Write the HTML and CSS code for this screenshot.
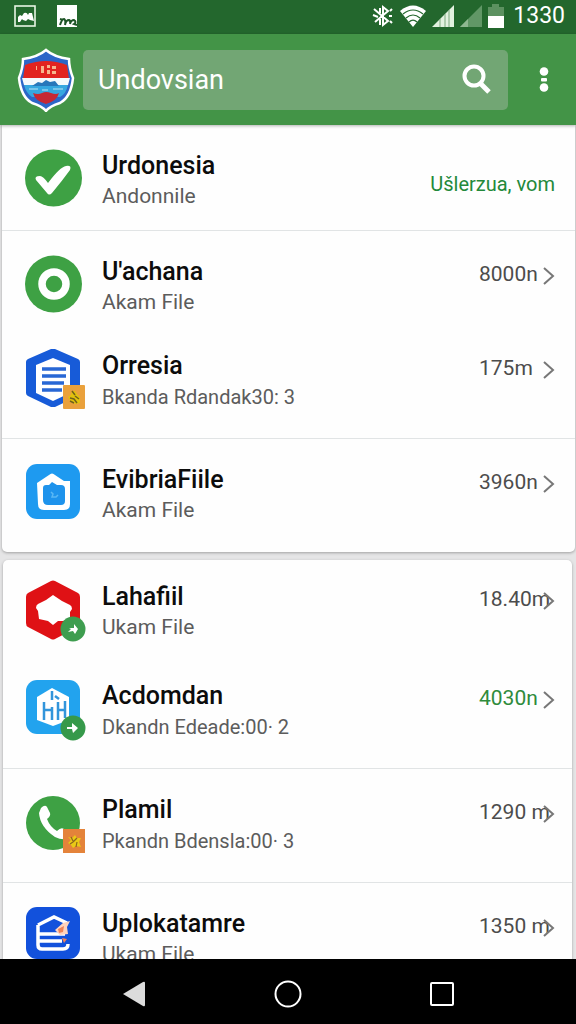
FILE: index.html
```
<!DOCTYPE html>
<html lang="en">
<head>
  <meta charset="UTF-8">
  <meta name="viewport" content="width=device-width, initial-scale=1">
  <title>Undovsian</title>
  <link rel="stylesheet" href="styles.css">
</head>
<body>
  <div class="status-bar">
    <div class="status-left">
      <svg width="22" height="22" viewBox="0 0 22 22"><rect x="1" y="1" width="20" height="20" fill="none" stroke="#e8f5e4" stroke-width="1.6"/><path d="M4 17V12l2-2 2 1 2-3q3-1 4 2l1-2h3l2 8-4-1-2-1-2 2-3-1-1-1-2 3z" fill="#fff"/></svg>
      <svg width="22" height="22" viewBox="0 0 22 22"><path d="M1 0h20v22H1z" fill="#fff"/><path d="M4 20q2-6 4-6 2 1 1 6 1-5 4-5 2 1 1 4 1-4 4-4 3 2 0 4l3 1M4 14l3 1" fill="none" stroke="#1d5426" stroke-width="2"/></svg>
    </div>
    <div class="status-right">
      <svg width="22" height="24" viewBox="0 0 22 24"><path d="M2 5l14 12-5 4V3l5 4L3 18M1 11l5 2M18 7l2-2M17 12h3M18 17l2 2M8 4v5M8 15v6" fill="none" stroke="#fff" stroke-width="2"/></svg>
      <svg width="26" height="22" viewBox="0 0 26 22"><path d="M0 6Q13-5 26 6L13 22z" fill="#fff"/><path d="M3 9q10-8 20 0M6 13q7-6 14 0M9 17q4-4 8 0" fill="none" stroke="#24672d" stroke-width="1.2"/></svg>
      <svg width="22" height="22" viewBox="0 0 22 22"><path d="M0 22L22 0v22z" fill="#e2f1df"/><path d="M8 14v8M13 9v13M17 5v17" stroke="#7ba77d" stroke-width="1"/></svg>
      <svg width="22" height="22" viewBox="0 0 22 22"><path d="M0 22L22 0v22z" fill="#619766"/><path d="M0 22L8 14v8z" fill="#8fb891"/></svg>
      <svg width="16" height="24" viewBox="0 0 16 24"><path d="M0 3h4V0h7v3h5v9H0z" fill="#5c9160"/><path d="M0 12h16v12H0z" fill="#fff"/></svg>
      <span class="clock">1330</span>
    </div>
  </div>

  <header class="app-bar">
    <svg class="logo" width="58" height="64" viewBox="0 0 58 64">
      <path d="M29 2q8 7 23 9 0 9 4 19-2 19-13 25-10 3-14 8-4-5-14-8Q4 49 2 30 6 20 6 11q15-2 23-9z" fill="#2c66c8" stroke="#fff" stroke-width="2.5"/>
      <path d="M8 17q11-4 21-4t21 4l2 14H6z" fill="#e2231f"/>
      <path d="M5 30h48l-2 7H7z" fill="#f4f9fc"/>
      <path d="M7 37h44q-2 9-8 12H15Q9 45 7 37z" fill="#36a7e0"/>
      <path d="M16 45q5 2 9 0t9 0 8 0q-2 8-13 11-11-3-13-11z" fill="#c62834"/>
      <path d="M24 18h3v7h-3zM30 17h3v3h-3zM30 22h3v4h-3zM35 18h4v3h-4zM35 23h4v3h-4zM19 18h1v4h-1z" fill="#f6b58c"/>
      <path d="M15 38l6-4 4 1 4-3 4 2 5-1 4 5z" fill="#2877ba"/>
      <path d="M12 41h9M25 42h6M36 41h10" stroke="#b9e2f3" stroke-width="1"/>
    </svg>
    <form class="search-box">
      <input type="text" id="searchInput" value="Undovsian" aria-label="Search">
      <button type="button" class="search-btn" aria-label="Search">
        <svg width="32" height="32" viewBox="0 0 32 32"><circle cx="13" cy="12" r="9.5" fill="none" stroke="#fff" stroke-width="4"/><path d="M19 19l9 9" stroke="#fff" stroke-width="5"/></svg>
      </button>
    </form>
    <button class="menu-btn" aria-label="More">
      <svg width="10" height="26" viewBox="0 0 10 26"><circle cx="5" cy="4.500" r="4.300" fill="#fff"/><rect x="2" y="11" width="6" height="3.500" rx="1" fill="#fff"/><circle cx="5" cy="20.500" r="4.300" fill="#fff"/></svg>
    </button>
  </header>

  <main class="content">
    <ul class="card card-main">
      <li class="divided">
        <a class="row row-top" href="#">
          <span class="icon"><svg width="58" height="58" viewBox="0 0 58 58"><circle cx="29.500" cy="29" r="28.500" fill="#3ea144"/><path d="M12 31q-2-4 4-4 3 0 8 7Q36 18 42 17q6-1 4 4Q38 32 28 44q-3 3-5 0z" fill="#fff"/></svg></span>
          <span class="text"><span class="title">Urdonesia</span><span class="sub">Andonnile</span></span>
          <span class="status">Ušlerzua, vom</span>
        </a>
      </li>
      <li>
        <a class="row row-short" href="#">
          <span class="icon"><svg width="58" height="58" viewBox="0 0 58 58"><circle cx="29.500" cy="29" r="28.500" fill="#3ea144"/><circle cx="30" cy="29" r="12" fill="none" stroke="#fff" stroke-width="7.500"/></svg></span>
          <span class="text"><span class="title">U'achana</span><span class="sub">Akam File</span></span>
          <span class="value">8000n</span>
          <svg class="chevron" width="12" height="18" viewBox="0 0 12 18"><path d="M1 1l9 8-9 8"/></svg>
        </a>
      </li>
      <li class="divided">
        <a class="row" href="#">
          <span class="icon">
            <svg width="58" height="58" viewBox="0 0 58 58"><path d="M31 0l23 10q2 1 2 3v31q0 2-2 3L31 58q-2 1-4 0L4 47q-2-1-2-3V13q0-2 2-3L27 0q2-1 4 0z" fill="#175bd8"/><path d="M29 9l17 7v28l-17 8-17-8V16z" fill="#fff"/><path d="M18 20h24M18 27h24M18 34h22M18 41h20" stroke="#2867d5" stroke-width="3.500"/></svg>
            <svg class="badge" width="24" height="24" viewBox="0 0 24 24"><rect x="1" width="22" height="24" rx="1" fill="#eaa13c"/><path d="M10 6l3 0 2 3 3 3v6l-4 1-5-2-3-5 3-2z" fill="#e2c20c"/><path d="M10 6l3 4M8 13l4 1 3 4M13 11l4 3M8 16l4 2" fill="none" stroke="#71611b" stroke-width="1.5"/></svg>
          </span>
          <span class="text"><span class="title">Orresia</span><span class="sub sub-long">Bkanda Rdandak30: 3</span></span>
          <span class="value">175m</span>
          <svg class="chevron" width="12" height="18" viewBox="0 0 12 18"><path d="M1 1l9 8-9 8"/></svg>
        </a>
      </li>
      <li>
        <a class="row" href="#">
          <span class="icon"><svg width="58" height="58" viewBox="0 0 58 58"><rect x="2" y="1" width="54" height="55" rx="11" fill="#1e9af0"/><path d="M13 20l12-8q3-3 6 0l9 6 6 0v23q0 6-6 6H20q-6 0-6-6z" fill="#fff"/><path d="M19 25q0-3 3-3h3l3-3 5 3h4q4 0 4 4v12q0 4-4 4H24q-5 0-5-5z" fill="#1e93ec"/><path d="M27 29l2 2-1 3h4l2-2" fill="none" stroke="#5ab8f5" stroke-width="1.500"/></svg></span>
          <span class="text"><span class="title">EvibriaFiile</span><span class="sub">Akam File</span></span>
          <span class="value">3960n</span>
          <svg class="chevron" width="12" height="18" viewBox="0 0 12 18"><path d="M1 1l9 8-9 8"/></svg>
        </a>
      </li>
    </ul>

    <ul class="card card-more">
      <li>
        <a class="row row-short" href="#">
          <span class="icon">
            <svg width="58" height="60" viewBox="0 0 58 60"><path d="M31 1l23 12q2 1 2 4v26q0 3-2 4L31 59q-2 1-4 0L4 47q-2-1-2-4V17q0-3 2-4L27 1q2-1 4 0z" fill="#df1115"/><path d="M29 15l9 6 8 4q2 1 2 4l-2 3v7l-7 2h-5l-5 4-5-4-9-2-1-8-2-3q0-3 2-4l8-4z" fill="#fff"/></svg>
            <svg class="badge badge-round" width="26" height="26" viewBox="0 0 26 26"><circle cx="13" cy="13" r="12.500" fill="#3e9d4f"/><path d="M8 16l3-3-2-1h5V8l4 5-3 5-2-3z" fill="#fff"/></svg>
          </span>
          <span class="text"><span class="title">Lahafiil</span><span class="sub">Ukam File</span></span>
          <span class="value">18.40m</span>
          <svg class="chevron" width="12" height="18" viewBox="0 0 12 18"><path d="M1 1l9 8-9 8"/></svg>
        </a>
      </li>
      <li class="divided">
        <a class="row" href="#">
          <span class="icon">
            <svg width="58" height="58" viewBox="0 0 58 58"><rect x="2" y="1" width="54" height="54" rx="11" fill="#22a3ee"/><path d="M13 18l15-9 17 9v23l-16 6-16-6z" fill="#fff"/><path d="M20 23v18M28 12v9M28 28v13M34 23v18M41 22v17M20 31h8M34 31h7M31 17l4 3" fill="none" stroke="#3295db" stroke-width="2.5"/></svg>
            <svg class="badge badge-round" width="26" height="26" viewBox="0 0 26 26"><circle cx="13" cy="13" r="12.500" fill="#36994a"/><path d="M7 12h5V8l6 5-5 5-1-4H7z" fill="#fff"/></svg>
          </span>
          <span class="text"><span class="title">Acdomdan</span><span class="sub sub-long">Dkandn Edeade:00· 2</span></span>
          <span class="value value-green">4030n</span>
          <svg class="chevron" width="12" height="18" viewBox="0 0 12 18"><path d="M1 1l9 8-9 8"/></svg>
        </a>
      </li>
      <li class="divided">
        <a class="row" href="#">
          <span class="icon">
            <svg width="58" height="58" viewBox="0 0 58 58"><circle cx="29" cy="30" r="27" fill="#3ea144"/><path d="M17 15q4-4 6-1l3 6q1 3-3 6 3 8 10 12 4-4 7-2l6 3v6q-7 3-15-1Q16 34 15 20z" fill="#fff"/></svg>
            <svg class="badge" width="24" height="24" viewBox="0 0 24 24"><rect x="1" width="22" height="24" fill="#e4833a"/><path d="M6 8l4 1 3-3 2 3h4l-2 4 2 5-5-1-3 2-2-3-3-2 3-3z" fill="#eac916"/><path d="M9 8l2 4M15 9l-4 4M8 15l3-2M15 13l-1 5" fill="none" stroke="#8c651e" stroke-width="1.200"/></svg>
          </span>
          <span class="text"><span class="title">Plamil</span><span class="sub sub-long">Pkandn Bdensla:00· 3</span></span>
          <span class="value">1290 m</span>
          <svg class="chevron" width="12" height="18" viewBox="0 0 12 18"><path d="M1 1l9 8-9 8"/></svg>
        </a>
      </li>
      <li>
        <a class="row" href="#">
          <span class="icon"><svg width="58" height="58" viewBox="0 0 58 58"><rect x="2" y="0" width="54" height="52" rx="11" fill="#1251dc"/><path d="M14 18l16-8 13 6M14 18v20q0 4 4 4h21q5 0 5-5M14 27h27M14 34h24" fill="none" stroke="#fff" stroke-width="3.500"/><path d="M31 23l8-7 7-2-3 6 1 7-8 1z" fill="#ffd3bd"/><path d="M34 22l6-3-1 6-4 1zM38 31l5 1-3 4z" fill="#f08358"/></svg></span>
          <span class="text"><span class="title">Uplokatamre</span><span class="sub">Ukam File</span></span>
          <span class="value">1350 m</span>
          <svg class="chevron" width="12" height="18" viewBox="0 0 12 18"><path d="M1 1l9 8-9 8"/></svg>
        </a>
      </li>
    </ul>
  </main>

  <nav class="nav-bar">
    <button aria-label="Back"><svg width="28" height="28" viewBox="0 0 28 28"><path d="M3 14L23 2q2-1 2 1v22q0 2-2 1z" fill="#dcdcdc"/></svg></button>
    <button aria-label="Home"><svg width="28" height="28" viewBox="0 0 28 28"><circle cx="14" cy="14" r="12.500" fill="none" stroke="#fff" stroke-width="2"/></svg></button>
    <button aria-label="Recent apps"><svg width="28" height="28" viewBox="0 0 28 28"><rect x="3" y="3" width="22" height="22" rx="1" fill="none" stroke="#fff" stroke-width="2"/></svg></button>
  </nav>
</body>
</html>
```
FILE: styles.css
```
* {
  box-sizing: border-box;
}
body {
  margin: 0;
  height: 100vh;
  display: flex;
  flex-direction: column;
  background: #e5e5e6;
  font-family: Roboto, "Liberation Sans", sans-serif;
  color: #0c0c0c;
}
svg {
  display: block;
  flex-shrink: 0;
}
button {
  background: none;
  border: none;
  padding: 0;
  cursor: pointer;
}

/* Status bar */
.status-bar {
  height: 34px;
  flex-shrink: 0;
  padding: 0 11px 2px 14px;
  display: flex;
  justify-content: space-between;
  align-items: center;
  background: #23672d;
  color: #fff;
}
.status-left {
  display: flex;
  gap: 20px;
}
.status-right {
  display: flex;
  align-items: center;
  gap: 6px;
}
.clock {
  margin-left: 3px;
  font-size: 23px;
  line-height: 32px;
}

/* App bar */
.app-bar {
  height: 91px;
  flex-shrink: 0;
  padding: 0 12px 0 17px;
  display: flex;
  align-items: center;
  background: #439447;
  box-shadow: 0 1px 3px rgba(0, 0, 0, 0.3);
  z-index: 1;
}
.search-box {
  flex: 1;
  min-width: 0;
  height: 60px;
  margin: 0 16px 0 8px;
  padding: 0 15px;
  display: flex;
  align-items: center;
  background: #72a674;
  border-radius: 5px;
}
#searchInput {
  flex: 1;
  min-width: 0;
  padding: 0;
  background: none;
  border: none;
  outline: none;
  color: #fff;
  font-family: inherit;
  font-size: 27px;
}
.menu-btn {
  width: 40px;
  height: 48px;
  display: flex;
  align-items: center;
  justify-content: center;
}

/* Lists */
.content {
  flex: 1;
  min-height: 0;
  overflow: hidden;
}
.card {
  margin: 0;
  padding: 0;
  list-style: none;
  background: #fefefe;
  box-shadow: 0 1px 3px rgba(0, 0, 0, 0.3);
}
.card-main {
  margin: 0 1px 8px 2px;
  border-radius: 0 0 5px 5px;
}
.card-more {
  margin: 0 4px 0 3px;
  border-radius: 5px 5px 0 0;
}
.divided {
  border-bottom: 1px solid #e1e4e5;
}
.row {
  height: 113px;
  padding: 24px 20px 0 22px;
  display: flex;
  align-items: flex-start;
  color: inherit;
  text-decoration: none;
}
.card-more .row {
  padding: 24px 17px 0 21px;
}
.row-short {
  height: 94px;
}
.row-top {
  height: 105px;
}
.card-more .row-short {
  height: 95px;
  padding-top: 20px;
}
.icon {
  position: relative;
  width: 58px;
  height: 58px;
  margin-right: 20px;
  flex-shrink: 0;
}
.badge {
  position: absolute;
  right: -4px;
  bottom: -2px;
}
.badge-round {
  bottom: -4px;
}
.text {
  flex: 1;
  min-width: 0;
  display: flex;
  flex-direction: column;
}
.title {
  font-size: 25px;
  font-weight: 500;
  line-height: 34px;
}
.sub {
  font-size: 21px;
  line-height: 26px;
  color: #5c5c5c;
}
.sub-long {
  font-size: 20px;
  line-height: 28px;
}
.value {
  width: 64px;
  flex-shrink: 0;
  font-size: 21px;
  line-height: 38px;
  white-space: nowrap;
  color: #4c4c4c;
}
.value-green {
  color: #2f8b3c;
}
.status {
  font-size: 20px;
  line-height: 24px;
  align-self: center;
  padding-bottom: 12px;
  color: #23893a;
}
.chevron {
  margin-top: 12px;
  fill: none;
  stroke: #777;
  stroke-width: 2;
}

/* Navigation bar */
.nav-bar {
  height: 65px;
  flex-shrink: 0;
  padding: 4px 57px 0;
  display: flex;
  background: #000;
}
.nav-bar button {
  flex: 1;
  display: flex;
  align-items: center;
  justify-content: center;
}
```
